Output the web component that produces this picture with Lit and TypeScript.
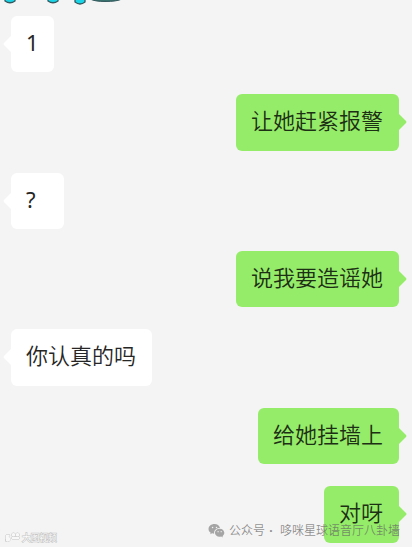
import { LitElement, html, css } from "lit";
import { customElement, property } from "lit/decorators.js";

@customElement("chat-bubble")
class ChatBubble extends LitElement {
  @property({ type: Boolean, reflect: true }) mine = false;
  @property() text = "";
  static styles = css`
    :host { display: flex; height: 56.4px; --c: #fff; }
    :host([mine]) { justify-content: flex-end; --c: #95ec69; }
    :host(.ask) .bubble { width: 53px; }
    :host(.latin) .bubble { font-weight: 400; }
    .bubble { position: relative; box-sizing: border-box; height: 100%; padding: 0 15.5px 0 15px; border-radius: 6px;
      background: var(--c); color: #262626; font-size: 22px; font-weight: 350; line-height: 53px; white-space: pre; }
    :host([mine]) .bubble { color: #1d2f15; padding-right: 16px; }
    .tail { position: absolute; top: 19px; left: -8px; width: 9px; height: 18px; fill: var(--c); }
    :host([mine]) .tail { left: auto; right: -8px; transform: scaleX(-1); }
  `;
  render() {
    return html`<div class="bubble">${this.text}<svg class="tail" viewBox="0 0 9 18"><path d="M9 0L1 8Q0 9 1 10L9 18Z"/></svg></div>`;
  }
}

const messages = [
  { text: "1", mine: false, cls: "latin" },
  { text: "让她赶紧报警", mine: true, cls: "" },
  { text: "?", mine: false, cls: "latin ask" },
  { text: "说我要造谣她", mine: true, cls: "" },
  { text: "你认真的吗", mine: false, cls: "" },
  { text: "给她挂墙上", mine: true, cls: "" },
  { text: "对呀", mine: true, cls: "" },
];

@customElement("app-root")
class AppRoot extends LitElement {
  static styles = css`
    :host { display: block; position: relative; width: 412px; height: 547px; overflow: hidden; background: #f4f4f4;
      font-family: "Noto Sans", "Noto Sans CJK SC", sans-serif; }
    .chat { display: flex; flex-direction: column; gap: 22.05px; padding: 15.7px 13px 0 11px; }
    .scrap { position: absolute; left: 0; top: 0; width: 130px; height: 8px; }
    .account { position: absolute; left: 208px; top: 520px; display: flex; align-items: center; height: 20px;
      color: rgba(100, 100, 100, 0.72); font-size: 12px; font-weight: 350; white-space: pre; }
    .account svg { width: 17px; height: 15px; margin-right: 4px; fill: #a5a5a5; }
    .dot { width: 15px; text-align: center; box-sizing: border-box; padding-right: 3px; font-weight: 700; }
    .mark { position: absolute; left: 5px; top: 530px; display: flex; align-items: center; height: 14px; gap: 2px;
      font-size: 8.700px; color: #fbfbfb; -webkit-text-stroke: 1.2px #c6c6c6; paint-order: stroke fill; }
    .mark svg { width: 15px; height: 11px; fill: #f8f8f8; stroke: #c0c0c0; stroke-width: 0.9; stroke-linejoin: round; }
  `;
  render() {
    return html`
      <svg class="scrap" viewBox="0 0 130 8">
        <g fill="#18d4e6" stroke="#34595e" stroke-width="1.3"><path d="M5-2V1Q10 4.500 15 1V-2ZM48-2V1Q53 4.500 58 1V-2ZM75-2V2Q80 6 85 2V-2Z"/></g>
        <path d="M90-1Q95 1.500 105 1.500Q117 1.500 122-1Z" fill="#39736f" stroke="#34595e"/>
      </svg>
      <div class="chat">${messages.map((m) => html`<chat-bubble class=${m.cls} .text=${m.text} ?mine=${m.mine}></chat-bubble>`)}</div>
      <div class="account">
        <svg viewBox="0 0 18 16"><path d="M7 1C3 1 .5 3.300 .5 6.300C.5 8 1.400 9.400 2.800 10.300L2.300 12L4.300 11L6.500 11.400C6 8 8.500 5.200 12.700 5.200C12 2.600 9.800 1 7 1Z"/><path d="M12.400 6C9.500 6 7.300 8 7.300 10.500C7.300 13.500 10.500 15.500 14 14.500L15.800 15.500L15.400 14C19 11.500 17.300 6 12.400 6Z"/><g fill="#f4f4f4"><circle cx="4.800" cy="4.700" r=".8"/><circle cx="9" cy="4.700" r=".8"/><circle cx="10.700" cy="9.200" r=".7"/><circle cx="14" cy="9.200" r=".7"/></g></svg><span>公众号</span><span class="dot">·</span><span>哆咪星球语音厅八卦墙</span>
      </div>
      <div class="mark"><svg viewBox="0 0 15 11"><path d="M1 3H5L3.500 5Q7 6 5 8.500Q3 10.500 1 9V7M1 3V10"/><circle cx="8.500" cy="3" r="2"/><circle cx="12.500" cy="3" r="2"/><path d="M7 5H14V7H7Z"/></svg><span>大图视频</span></div>`;
  }
}
